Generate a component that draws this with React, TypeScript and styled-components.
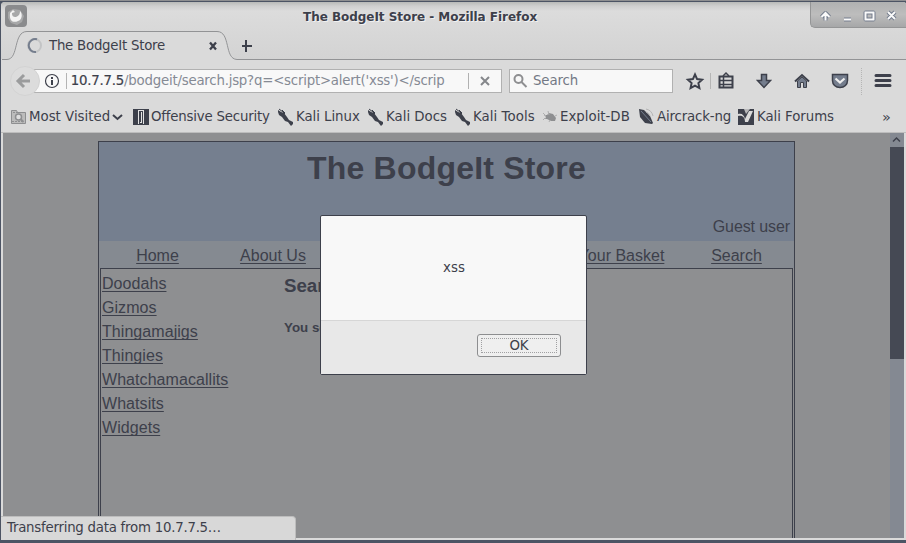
import React from "react";
import styled, { createGlobalStyle } from "styled-components";

const ink = "#3d404b";
const slate = "#747d8d";
const grey = "#8e8f91";
const chrome = "#dadada";

const GlobalStyle = createGlobalStyle`
  * { box-sizing: border-box; }
  body { margin: 0; overflow: hidden; }
`;

const Desktop = styled.div`
  width: 906px;
  height: 543px;
  padding: 1px 0 3px 1px;
  background: #4c5464;
  border-top: 1px solid #8e8f91;
  font-family: "DejaVu Sans", sans-serif;
  font-size: 13.33px;
  color: ${ink};
`;

const Window = styled.div`
  position: relative;
  height: 538px;
  display: flex;
  flex-direction: column;
  background: ${chrome};
  border-radius: 4px 3px 0 0;
  overflow: hidden;
`;

const Header = styled.header`
  height: 58px;
  display: flex;
  flex-direction: column;
  background: linear-gradient(#b9bab8 0, #cfcfcf 4px, #dcdcdc 9px, #d9d9d9 24px, #d3d3d3 57px);
`;

const TitleBar = styled.div`
  height: 28px;
  display: grid;
  grid-template-columns: 92px 1fr 96px;
  align-items: start;
  padding-left: 4px;
`;

const Title = styled.div`
  padding: 7px 0 0 0;
  margin-left: 206px;
  font-weight: bold;
  font-size: 12px;
  line-height: 16px;
  letter-spacing: -0.04px;
  white-space: nowrap;
  text-shadow: 1px 1px 0 #f2f2f2;
`;

const AppMenu = styled.div`
  width: 22px;
  height: 22px;
  margin-top: 3px;
  border-radius: 4px;
  background: #8a8b8d;
  svg { display: block; }
`;

const Controls = styled.div`
  height: 26px;
  display: flex;
  border: 1px solid #949596;
  border-top: 0;
  border-right: 0;
  border-radius: 0 0 0 5px;
  background: linear-gradient(#b0b1b1, #bdbdbd 50%, #a6a7a8);
  svg { display: block; }
`;

const TabStrip = styled.div`
  height: 30px;
  display: flex;
`;

const Tab = styled.div`
  width: 241px;
  height: 31px;
  display: grid;
  grid-template-columns: 48px 149px 1fr;
  position: relative;
  line-height: 31px;
  > svg { position: absolute; left: 0; top: 0; }
`;

const TabTitle = styled.span`
  grid-column: 2;
  position: relative;
  white-space: nowrap;
  letter-spacing: -0.24px;
`;

const TabRest = styled.div`
  flex: 1;
  border-bottom: 1px solid #929395;
  svg { display: block; }
`;

const NavBar = styled.div`
  height: 41px;
  display: flex;
  align-items: center;
  padding-left: 9px;
`;

const BackButton = styled.div`
  width: 30px;
  height: 30px;
  z-index: 1;
  border-radius: 50%;
  background: #dcdcdc;
  border: 1px solid #d3d3d3;
  svg { display: block; }
`;

const AddressBox = styled.div`
  width: 468px;
  height: 24px;
  margin-left: -6px;
  display: flex;
  align-items: center;
  border: 1px solid #b1b1b1;
  background: #f8f8f8;
  white-space: nowrap;
`;

const InfoCell = styled.div`
  width: 32px;
  height: 16px;
  padding-left: 9px;
  border-right: 1px solid #b4b4b4;
  svg { display: block; }
`;

const Address = styled.div`
  width: 380px;
  margin-left: 4px;
  color: #858a94;
  line-height: 20px;
  letter-spacing: -0.22px;
  b { font-weight: normal; color: ${ink}; -webkit-text-stroke: 0.2px ${ink}; }
`;

const StopCell = styled.div`
  width: 33px;
  height: 16px;
  margin-left: 23px;
  border-left: 1px solid #b1b1b1;
  svg { display: block; }
`;

const SearchBox = styled.div`
  width: 164px;
  height: 24px;
  margin-left: 7px;
  display: flex;
  align-items: center;
  gap: 5px;
  padding-left: 2px;
  border: 1px solid #b1b1b1;
  background: #f8f8f8;
  color: #737985;
  letter-spacing: -0.1px;
`;

const ToolIcons = styled.div`
  height: 30px;
  svg { display: block; }
`;

const Bookmarks = styled.div`
  height: 32px;
  display: flex;
  align-items: center;
  padding-left: 9px;
  border-bottom: 1px solid #bdbdbd;
`;

const Bookmark = styled.div<{ $width: number; $track?: number }>`
  width: ${(p) => p.$width}px;
  height: 22px;
  display: flex;
  align-items: center;
  gap: 2px;
  white-space: nowrap;
  letter-spacing: ${(p) => p.$track ?? 0}px;
  svg { flex: none; }
`;

const Overflow = styled.span`
  font-size: 14.5px;
`;

const Viewport = styled.main`
  height: 405px;
  margin: 0 2px 0 2px;
  display: grid;
  grid-template-columns: 1fr 14px;
  background: ${grey};
  overflow: hidden;
`;

const Page = styled.div`
  padding: 8px 0 0 95px;
  font-family: "Liberation Sans", sans-serif;
  font-size: 16px;
`;

const Store = styled.div`
  width: 697px;
  height: 420px;
  border: 1px solid ${ink};
`;

const Banner = styled.div`
  height: 99px;
  display: flex;
  flex-direction: column;
  justify-content: space-between;
  background: #757f8f;
  h1 {
    margin: 8px 0 0;
    text-align: center;
    font-size: 32px;
    line-height: 36px;
    letter-spacing: 0.2px;
  }
`;

const Guest = styled.div`
  padding: 0 4px 4px 0;
  text-align: right;
  line-height: 20px;
  letter-spacing: -0.1px;
`;

const StoreNav = styled.nav`
  height: 27px;
  display: grid;
  grid-template-columns: 117px 114px 118px 116px 115px 115px;
  text-align: center;
  line-height: 30px;
  background: #858a91;
`;

const Link = styled.a<{ $track?: number }>`
  color: ${ink};
  text-decoration: underline;
  text-decoration-thickness: 1px;
  text-underline-offset: 2px;
  text-decoration-skip-ink: none;
  letter-spacing: ${(p) => p.$track ?? 0}px;
`;

const Body = styled.div`
  height: 320px;
  margin: 0 1px;
  display: grid;
  grid-template-columns: 183px 1fr;
  border: 1px solid ${ink};
`;

const Categories = styled.div`
  display: flex;
  flex-direction: column;
  padding: 3px 0 0 1px;
  line-height: 24px;
`;

const Results = styled.section`
  h3 { margin: 5px 0 0; font-size: 18.7px; line-height: 24px; }
  p { margin: 20px 0 0; font-size: 13.33px; font-weight: bold; line-height: 20px; }
`;

const Scrollbar = styled.div`
  display: flex;
  flex-direction: column;
  background: #848992;
  svg { display: block; }
`;

const Thumb = styled.div`
  height: 212px;
  background: #454954;
`;

const Track = styled.div`
  flex: 1;
`;

const Dialog = styled.div`
  position: absolute;
  left: 319px;
  top: 213px;
  width: 267px;
  height: 160px;
  display: grid;
  grid-template-rows: 104px 1fr;
  border: 1px solid ${ink};
  border-radius: 2px;
  background: #f8f8f8;
`;

const Message = styled.div`
  display: flex;
  align-items: center;
  justify-content: center;
  padding: 0 0 2px 1px;
`;

const Actions = styled.div`
  display: flex;
  justify-content: flex-end;
  padding: 13px 25px 0 0;
  border-top: 1px solid #d6d6d6;
  background: #e8e8e8;
`;

const OkButton = styled.button`
  width: 84px;
  height: 23px;
  padding: 3px;
  border: 1px solid #8d8e90;
  border-radius: 3px;
  background: #efefef;
  color: ${ink};
  font: 13.33px "DejaVu Sans", sans-serif;
  span {
    display: block;
    height: 15px;
    line-height: 14px;
    border: 1px dotted #a0a0a2;
  }
`;

const Status = styled.div`
  position: absolute;
  left: 0;
  bottom: 0;
  width: 295px;
  height: 24px;
  padding-left: 6px;
  line-height: 21px;
  letter-spacing: -0.24px;
  background: #d8d8d8;
  border: solid #bdbdbd;
  border-width: 1px 1px 0 0;
  border-radius: 0 4px 0 0;
`;

const KaliIcon = () => (
  <svg width="17" height="18" viewBox="0 0 17 18">
    <path d="M1 2l3 2 3 1 3 4 2 3 4 2 0 2-2 2-3-4-3-1-3-4-3-2-1-3z" fill={ink} />
    <path d="M2 1l4 3 2 2M5 2l3 3" stroke={ink} fill="none" />
  </svg>
);

const FolderIcon = () => (
  <svg width="17" height="17" viewBox="0 0 17 17" fill="none" stroke="#8e8f91">
    <path d="M1.500 15.500v-13h5l1 2h8v11z" fill="#bcbcbc" />
    <path d="M3 4.500h11M2 13.500h12" strokeDasharray="2 1" />
    <circle cx="8.500" cy="9" r="3" fill="#dedede" strokeWidth="1.500" />
    <path d="M10.500 11l3 3" strokeWidth="2" />
  </svg>
);

const OffsecIcon = () => (
  <svg width="16" height="16" viewBox="0 0 16 16">
    <path d="M0 0h16v16H0z" fill={ink} />
    <path d="M5 1h1v14H5zM6 1h4v1H6zM10 1h1v14h-1zM8 3h1v11H7v-1h1z" fill="#e4e4e4" />
  </svg>
);

const BugIcon = () => (
  <svg width="16" height="16" viewBox="0 0 16 16">
    <path d="M2 6l3 0 2-2 4 1 3 4-1 3-4 0-4-2-2 0 1-2z" fill="#8e8f91" />
    <path d="M1 4l3 3M6 2l1 4M3 9l-2 2M8 11l-1 2M13 7l2-1" stroke="#adadae" />
  </svg>
);

const AirIcon = () => (
  <svg width="17" height="17" viewBox="0 0 17 17">
    <path d="M1 1l5 1 6 6 3 7-1 1-7-1-5-6z" fill={ink} />
    <path d="M3 3l10 11" stroke={slate} />
    <path d="M8 1c4 1 6 3 7 7M8 4c3 1 3 2 4 4" stroke="#b5b5b5" fill="none" />
  </svg>
);

const ForumIcon = () => (
  <svg width="17" height="16" viewBox="0 0 17 16">
    <path d="M0 0h16v16H0z" fill={ink} />
    <path d="M0 5c4-1 6 1 7 5l4-8h4l-5 11H7C7 9 5 6 0 7z" fill="#dadada" />
    <path d="M6 0h6L8 5z" fill="#b8b8ba" />
  </svg>
);

export default function App() {
  return (
    <>
      <GlobalStyle />
      <Desktop>
        <Window>
          <Header>
            <TitleBar>
              <AppMenu>
                <svg width="22" height="22" viewBox="0 0 22 22">
                  <path d="M3 7l5-3 7 1 4 6-2 6-5 3-6-2-3-5z" fill="#a7a8a9" />
                  <path d="M5 8c-1 9 4 10 8 8 4-1 5-7 2-10 0 3-1 5-4 6-3 0-4-1-4-4l3-1-2-2z" fill="#f3f3f3" />
                </svg>
              </AppMenu>
              <Title>The BodgeIt Store - Mozilla Firefox</Title>
              <Controls>
                <svg width="95" height="25" viewBox="0 0 95 25" fill="none">
                  <g stroke={slate} strokeWidth="4" strokeLinejoin="round">
                    <path d="M14.500 18.500v-7M10.500 15l4-4 4 4M33 17.500h7M54.500 10.500h8v7h-8zM77 10l7 7M84 10l-7 7" />
                  </g>
                  <g stroke="#fafafa" strokeWidth="2">
                    <path d="M14.500 18.500v-7M10.500 15l4-4 4 4M33 17.500h7M54.500 10.500h8v7h-8zM77 10l7 7M84 10l-7 7" />
                  </g>
                </svg>
              </Controls>
            </TitleBar>
            <TabStrip>
              <Tab>
                <svg width="241" height="31" viewBox="0 0 241 31" fill="none">
                  <path d="M0 31h241v-1.500h-5C226 29 230 2 217 2H25C10 2 17 29 5 29H0z" fill={chrome} />
                  <path d="M1 29.500h5C18 29 12 1.500 26 1.500h190c14 0 7 27.500 20 28h5" stroke="#929395" />
                  <circle cx="33.500" cy="15.500" r="6.500" stroke="#c3c4c5" strokeWidth="2" />
                  <path d="M36 9.300A6.500 6.500 0 1 0 35 22" stroke={slate} strokeWidth="2" />
                  <path d="M209 12.500l6 7M215 12.500l-6 7" stroke={ink} strokeWidth="2.300" />
                </svg>
                <TabTitle>The BodgeIt Store</TabTitle>
              </Tab>
              <TabRest>
                <svg width="20" height="28" viewBox="0 0 20 28">
                  <path d="M-2 16h12M4 10v12" stroke={ink} strokeWidth="2" />
                </svg>
              </TabRest>
            </TabStrip>
          </Header>
          <NavBar>
            <BackButton>
              <svg width="28" height="28" viewBox="0 0 28 28" fill="none" stroke="#9b9c9d" strokeWidth="3">
                <path d="M19 14H8M13 8l-6 6 6 6" />
              </svg>
            </BackButton>
            <AddressBox>
              <InfoCell>
                <svg width="16" height="16" viewBox="0 0 16 16" fill="none" stroke={ink}>
                  <circle cx="8" cy="8" r="6.500" strokeWidth="1.200" />
                  <path d="M8 7v5M8 4v2" strokeWidth="2" />
                </svg>
              </InfoCell>
              <Address><b>10.7.7.5</b>/bodgeit/search.jsp?q=&lt;script&gt;alert('xss')&lt;/scrip</Address>
              <StopCell>
                <svg width="32" height="16" viewBox="0 0 32 16">
                  <path d="M12 4l8 8M20 4l-8 8" stroke="#85878b" strokeWidth="2" />
                </svg>
              </StopCell>
            </AddressBox>
            <SearchBox>
              <svg width="16" height="16" viewBox="0 0 16 16" fill="none" stroke="#8e8f91" strokeWidth="2">
                <circle cx="6.500" cy="6" r="4" />
                <path d="M9.500 9l5 5" />
              </svg>
              Search
            </SearchBox>
            <ToolIcons>
              <svg width="231" height="30" viewBox="673 65 231 30" fill="none" stroke={ink}>
                <path d="M695 73.500l2.100 4.600 5 .6-3.700 3.400 1 5-4.400-2.500-4.400 2.500 1-5-3.700-3.400 5-.6z" strokeWidth="2" />
                <path d="M710.500 72v16" stroke="#b5b5b5" />
                <path d="M719.500 75.500h13v11h-13z" strokeWidth="2" />
                <path d="M723 75l3-3 3 3M720 79.500h12M720 83.500h12M723.500 76v10" strokeWidth="1.500" />
                <path d="M761.500 73.500h5v6h4l-6.500 7-6.500-7h4z" fill={slate} strokeWidth="1.500" />
                <path d="M795 80.500l7-6.500 7 6.500" strokeWidth="2" />
                <path d="M797.500 80l4.500-4 4.500 4v6.500h-3v-5h-3v5h-3z" fill={slate} />
                <path d="M832.500 73.500h15v6c0 4-3 7-7.500 7s-7.500-3-7.500-7z" fill={slate} strokeWidth="1.500" />
                <path d="M835.500 77.500l4.500 4 4.500-4" stroke="#eee" strokeWidth="2.200" />
                <path d="M861.500 67v27" stroke="#b5b5b5" strokeDasharray="1 1" />
                <path d="M876 74.500h14M876 79.500h14M876 84.500h14" strokeWidth="3" strokeLinecap="round" />
              </svg>
            </ToolIcons>
          </NavBar>
          <Bookmarks>
            <Bookmark $width={123}>
              <FolderIcon />
              Most Visited
              <svg width="11" height="10" viewBox="0 0 11 10" fill="none"><path d="M1 3l4.500 4L10 3" stroke={ink} strokeWidth="2" /></svg>
            </Bookmark>
            <Bookmark $width={144} $track={-0.2}><OffsecIcon />Offensive Security</Bookmark>
            <Bookmark $width={90} $track={-0.05}><KaliIcon />Kali Linux</Bookmark>
            <Bookmark $width={87}><KaliIcon />Kali Docs</Bookmark>
            <Bookmark $width={88} $track={0.05}><KaliIcon />Kali Tools</Bookmark>
            <Bookmark $width={96}><BugIcon />Exploit-DB</Bookmark>
            <Bookmark $width={100} $track={-0.15}><AirIcon />Aircrack-ng</Bookmark>
            <Bookmark $width={144} $track={-0.05}><ForumIcon />Kali Forums</Bookmark>
            <Overflow>»</Overflow>
          </Bookmarks>
          <Viewport>
            <Page>
              <Store>
                <Banner>
                  <h1>The BodgeIt Store</h1>
                  <Guest>Guest user</Guest>
                </Banner>
                <StoreNav>
                  <span><Link>Home</Link></span>
                  <span><Link>About Us</Link></span>
                  <span><Link>Contact Us</Link></span>
                  <span><Link>Login</Link></span>
                  <span><Link>Your Basket</Link></span>
                  <span><Link>Search</Link></span>
                </StoreNav>
                <Body>
                  <Categories>
                    {["Doodahs", "Gizmos", "Thingamajigs", "Thingies", "Whatchamacallits", "Whatsits", "Widgets"].map((c) => (
                      <div key={c}><Link $track={0.06}>{c}</Link></div>
                    ))}
                  </Categories>
                  <Results>
                    <h3>Search</h3>
                    <p>You searched for:</p>
                  </Results>
                </Body>
              </Store>
            </Page>
            <Scrollbar>
              <svg width="14" height="14" viewBox="0 0 14 14" fill="none"><path d="M3 8.500L6.500 5 10 8.500" stroke={ink} strokeWidth="1.500" /></svg>
              <Thumb />
              <Track />
              <svg width="14" height="14" viewBox="0 0 14 14" fill="none"><path d="M3.500 4L6.500 7 9.500 4" stroke={ink} strokeWidth="2" /></svg>
            </Scrollbar>
          </Viewport>
          <Dialog>
            <Message>xss</Message>
            <Actions><OkButton><span>OK</span></OkButton></Actions>
          </Dialog>
          <Status>Transferring data from 10.7.7.5…</Status>
        </Window>
      </Desktop>
    </>
  );
}
